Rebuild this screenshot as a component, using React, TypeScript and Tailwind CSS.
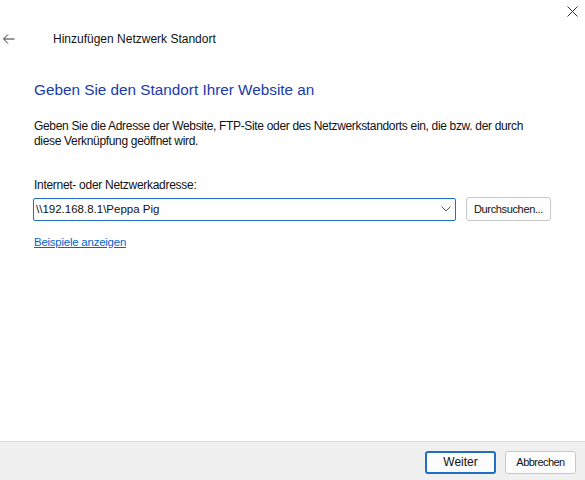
import React from "react";

export default function App() {
  const font = { fontFamily: '"Liberation Sans", Arial, sans-serif' };
  return (
    <div
      className="w-[585px] h-[480px] bg-white flex flex-col text-[#000] overflow-hidden"
      style={font}
    >
      <div className="h-[24px] flex justify-end items-start pr-[7px] pt-[6px]">
        <svg width="11" height="11" viewBox="0 0 11 11">
          <path d="M0.5 0.5 L10.5 10.5 M10.5 0.5 L0.5 10.5" stroke="#333" strokeWidth="1" fill="none" />
        </svg>
      </div>
      <div className="h-[30px] flex items-center">
        <div className="w-[53px] flex items-center pl-[3px]">
          <svg width="12" height="10" viewBox="0 0 12 10">
            <path d="M11.5 5 H1 M5 0.5 L0.5 5 L5 9.5" stroke="#333" strokeWidth="1" fill="none" />
          </svg>
        </div>
        <span className="text-[12px] leading-[16px] text-[#111]">Hinzufügen Netzwerk Standort</span>
      </div>
      <div className="pl-[34px] pr-[30px] pt-[26px] flex flex-col">
        <div className="text-[15.3px] leading-[20px] text-[#1a3aa8]">
          Geben Sie den Standort Ihrer Website an
        </div>
        <div className="mt-[19px] text-[12px] leading-[15px] tracking-[-0.33px] text-[#111]">
          Geben Sie die Adresse der Website, FTP-Site oder des Netzwerkstandorts ein, die bzw. der durch
          <br />
          diese Verknüpfung geöffnet wird.
        </div>
        <div className="mt-[29px] text-[12px] leading-[15px] tracking-[-0.29px] text-[#111]">
          Internet- oder Netzwerkadresse:
        </div>
        <div className="mt-[4px] flex items-center ml-[-1px]">
          <div className="w-[423px] h-[23px] border border-[#1f6fc4] rounded-[2px] flex items-center justify-between pl-[2px] pr-[4px]">
            <span className="text-[11.5px] leading-[16px] text-[#111]">\\192.168.8.1\Peppa Pig</span>
            <svg width="10" height="6" viewBox="0 0 10 6">
              <path d="M0.5 0.5 L5 5 L9.5 0.5" stroke="#555" strokeWidth="1" fill="none" />
            </svg>
          </div>
          <button className="ml-[10px] w-[85px] h-[24px] border border-[#c8c8c8] rounded-[3px] bg-[#fdfdfd] text-[11px] tracking-[-0.35px] text-[#111] flex items-center justify-center">
            Durchsuchen...
          </button>
        </div>
        <div className="mt-[8px]">
          <span className="text-[11.5px] leading-[15px] tracking-[-0.25px] text-[#0066cc] underline">Beispiele anzeigen</span>
        </div>
      </div>
      <div className="flex-1" />
      <div className="h-[39px] border-t border-[#dcdcdc] bg-[#f0f0f0] flex items-center justify-end pr-[9px] gap-[9px] pt-[2px]">
        <button className="w-[71px] h-[23px] border-2 border-[#1f6fc4] rounded-[3px] bg-[#fdfdfd] text-[12px] text-[#111] flex items-center justify-center">
          Weiter
        </button>
        <button className="w-[71px] h-[23px] border border-[#c8c8c8] rounded-[3px] bg-[#fdfdfd] text-[11px] tracking-[-0.55px] text-[#111] flex items-center justify-center">
          Abbrechen
        </button>
      </div>
    </div>
  );
}
